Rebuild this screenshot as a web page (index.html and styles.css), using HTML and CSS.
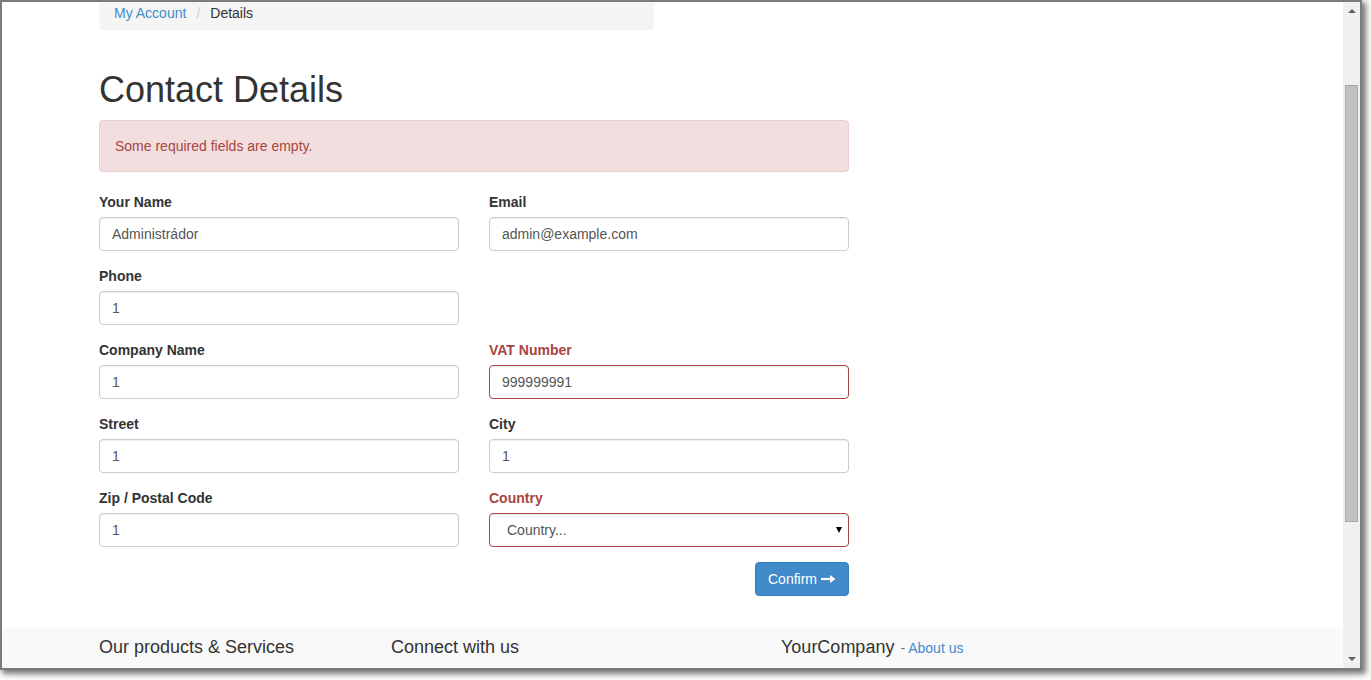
FILE: index.html
```html
<!DOCTYPE html>
<html lang="en">
<head>
<meta charset="utf-8">
<title>Contact Details</title>
<link rel="stylesheet" href="styles.css">
</head>
<body>
<div class="window">
  <div class="viewport">
    <main class="page">
      <div class="container">
        <ol class="breadcrumb">
          <li><a href="#">My Account</a></li>
          <li class="sep">/</li>
          <li class="active">Details</li>
        </ol>
        <h1 class="title">Contact Details</h1>
        <div class="alert">Some required fields are empty.</div>
        <form class="form">
          <div class="grid">
            <div class="group">
              <label class="label">Your Name</label>
              <div class="input">Administrádor</div>
            </div>
            <div class="group">
              <label class="label">Email</label>
              <div class="input">admin@example.com</div>
            </div>
            <div class="group">
              <label class="label">Phone</label>
              <div class="input">1</div>
            </div>
            <div class="group empty"></div>
            <div class="group">
              <label class="label">Company Name</label>
              <div class="input">1</div>
            </div>
            <div class="group error">
              <label class="label">VAT Number</label>
              <div class="input">999999991</div>
            </div>
            <div class="group">
              <label class="label">Street</label>
              <div class="input">1</div>
            </div>
            <div class="group">
              <label class="label">City</label>
              <div class="input">1</div>
            </div>
            <div class="group">
              <label class="label">Zip / Postal Code</label>
              <div class="input">1</div>
            </div>
            <div class="group error">
              <label class="label">Country</label>
              <div class="input select"><span class="select-text">Country...</span><span class="caret"></span></div>
            </div>
          </div>
          <div class="actions">
            <button type="button" class="btn">Confirm <svg class="arrow" width="15" height="10" viewBox="0 0 15 10"><path d="M0 5H10" stroke="#fff" stroke-width="2.2"/><path d="M9 1L14.5 5L9 9Z" fill="#fff"/></svg></button>
          </div>
        </form>
      </div>
      <footer class="footer">
        <div class="container footer-cols">
          <h4 class="footer-title">Our products &amp; Services</h4>
          <h4 class="footer-title">Connect with us</h4>
          <h4 class="footer-title">YourCompany <small class="about">- <a href="#">About us</a></small></h4>
        </div>
      </footer>
    </main>
    <div class="scrollbar">
      <span class="sb-up"></span>
      <div class="sb-track"><div class="sb-thumb"></div></div>
      <span class="sb-down"></span>
    </div>
  </div>
</div>
</body>
</html>
```

FILE: styles.css
```css
* { box-sizing: border-box; }

html, body {
  margin: 0;
  padding: 0;
  background: #ffffff;
}

body {
  font-family: "Liberation Sans", Arial, Helvetica, sans-serif;
  font-size: 14px;
  line-height: 20px;
  color: #333333;
  width: 1371px;
  height: 680px;
  overflow: hidden;
}

.window {
  width: 1362px;
  height: 670px;
  border: 2px solid #7c7c7c;
  box-shadow: 3px 3px 6px 1px rgba(0, 0, 0, 0.55);
  background: #ffffff;
}

.viewport {
  display: flex;
  height: 100%;
}

.page {
  flex: 1 1 auto;
  height: 100%;
  overflow: hidden;
  position: relative;
}

.container {
  margin-left: 97px;
  width: 1170px;
}

/* breadcrumb */
.breadcrumb {
  list-style: none;
  margin: -8px 0 20px 0;
  padding: 9px 15px 7px 15px;
  width: 555px;
  background: #f5f5f5;
  border-radius: 4px;
  display: flex;
}
.breadcrumb li { display: block; }
.breadcrumb a { color: #428bca; text-decoration: none; }
.breadcrumb .sep { color: #cccccc; padding: 0 10px 0 10px; }
.breadcrumb .active { color: #333333; }

.title {
  font-size: 36px;
  font-weight: 400;
  line-height: 39.6px;
  margin: 40px 0 10px 0;
  color: #333333;
}

.alert {
  width: 750px;
  padding: 15px;
  background: #f2dede;
  border: 1px solid #ebccd1;
  border-radius: 4px;
  color: #a94442;
  margin-bottom: 20px;
}

.form { width: 750px; }

.grid {
  display: grid;
  grid-template-columns: 360px 360px;
  column-gap: 30px;
}

.group {
  margin-bottom: 15px;
}
.group.empty { min-height: 59px; }

.label {
  display: block;
  font-weight: 700;
  margin-bottom: 5px;
  color: #333333;
}

.input {
  height: 34px;
  padding: 6px 12px;
  border: 1px solid #cccccc;
  border-radius: 4px;
  background: #ffffff;
  color: #555555;
  box-shadow: inset 0 1px 1px rgba(0, 0, 0, 0.075);
  white-space: nowrap;
}

.group.error .label { color: #a94442; }
.group.error .input { border-color: #a94442; }

.select {
  display: flex;
  align-items: center;
  justify-content: space-between;
  padding: 6px 6px 6px 17px;
}
.select-text { color: #555555; }
.caret {
  width: 0;
  height: 0;
  border-left: 3.5px solid transparent;
  border-right: 3.5px solid transparent;
  border-top: 6px solid #000000;
}

.actions {
  display: flex;
  justify-content: flex-end;
}

.btn {
  height: 34px;
  padding: 6px 12px;
  border: 1px solid #357ebd;
  border-radius: 4px;
  background: #428bca;
  color: #ffffff;
  font-family: "Liberation Sans", Arial, Helvetica, sans-serif;
  font-size: 14px;
  line-height: 20px;
  display: flex;
  align-items: center;
}
.arrow { margin-left: 4px; }

/* footer */
.footer {
  margin-top: 32px;
  background: #f9f9f9;
  height: 60px;
}
.footer-cols {
  display: grid;
  grid-template-columns: 292px 390px auto;
}
.footer-title {
  margin: 10px 0 0 0;
  font-size: 18px;
  font-weight: 400;
  line-height: 19.8px;
  color: #333333;
}
.about {
  font-size: 14px;
  color: #777777;
  margin-left: 1px;
}
.about a { color: #428bca; text-decoration: none; }

/* scrollbar */
.scrollbar {
  flex: 0 0 17px;
  width: 17px;
  height: 100%;
  background: #f0f0f0;
  display: flex;
  flex-direction: column;
  align-items: center;
}
.sb-up, .sb-down {
  width: 0;
  height: 0;
  border-left: 4px solid transparent;
  border-right: 4px solid transparent;
}
.sb-up {
  flex: 0 0 4px;
  margin: 7px 0 6px 0;
  border-bottom: 4px solid #606060;
}
.sb-down {
  flex: 0 0 4px;
  border-top: 4px solid #606060;
  margin: 6px 0 7px 0;
}
.sb-track {
  flex: 1 1 auto;
  width: 100%;
  padding: 66px 2px 0 2px;
}
.sb-thumb {
  width: 13px;
  height: 437px;
  background: #c1c1c1;
  border: 1px solid #a8a8a8;
}
```
